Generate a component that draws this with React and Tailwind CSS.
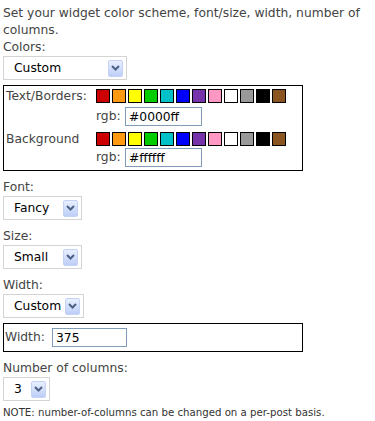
const SWATCHES = [
  "#cc0000",
  "#ff9911",
  "#ffff00",
  "#00cc00",
  "#00c0c8",
  "#0000ff",
  "#7733aa",
  "#ff99c4",
  "#ffffff",
  "#999999",
  "#000000",
  "#8a5520",
];

function Arrow() {
  return (
    <span className="flex h-[17px] w-[15px] items-center justify-center rounded-[2px] border border-[#c4d3f5] bg-gradient-to-b from-[#e8efff] to-[#bdcef7]">
      <svg width="9" height="6" viewBox="0 0 9 6">
        <path d="M1 1 L4.5 4.5 L8 1" fill="none" stroke="#4d6185" strokeWidth="2" />
      </svg>
    </span>
  );
}

function FakeSelect({ value, width }) {
  return (
    <div
      className={`flex h-[24px] items-center justify-between border border-[#d4d4d4] bg-white pl-[10px] pr-[3px] text-black ${width}`}
    >
      <span>{value}</span>
      <Arrow />
    </div>
  );
}

function Swatches() {
  return (
    <div className="flex gap-[2px]">
      {SWATCHES.map((c) => (
        <span key={c} className="h-[14px] w-[14px] border border-black" style={{ backgroundColor: c }} />
      ))}
    </div>
  );
}

function RgbRow({ value }) {
  return (
    <div className="flex items-center">
      <span className="w-[29px]">rgb:</span>
      <input
        readOnly
        value={value}
        className="h-[19px] w-[77px] border border-[#7f9db9] px-[3px] text-black outline-none"
      />
    </div>
  );
}

export default function App() {
  return (
    <div className="min-h-[421px] bg-white px-[3px] pt-[5px] font-['DejaVu_Sans',sans-serif] text-[12.3px] leading-[17px] text-[#444]">
      <p>Set your widget color scheme, font/size, width, number of columns.</p>

      <div>Colors:</div>
      <div>
        <FakeSelect value="Custom" width="w-[124px]" />
      </div>

      <div className="mt-[5px] w-[300px] border border-black px-[2px] pb-[3px] pt-[3px]">
        <div className="grid grid-cols-[90px_1fr]">
          <div className="flex h-[14px] items-center">Text/Borders:</div>
          <Swatches />
          <div />
          <div className="mt-[4px]">
            <RgbRow value="#0000ff" />
          </div>
          <div className="mt-[6px] flex h-[14px] items-center">Background</div>
          <div className="mt-[6px]">
            <Swatches />
          </div>
          <div />
          <div className="mt-[2px]">
            <RgbRow value="#ffffff" />
          </div>
        </div>
      </div>

      <div className="mt-[8px]">Font:</div>
      <FakeSelect value="Fancy" width="w-[79px]" />

      <div className="mt-[8px]">Size:</div>
      <FakeSelect value="Small" width="w-[79px]" />

      <div className="mt-[8px]">Width:</div>
      <FakeSelect value="Custom" width="w-[81px]" />

      <div className="mt-[5px] flex w-[300px] items-center border border-black py-[4px] pl-[1px]">
        <span className="w-[47px]">Width:</span>
        <input
          readOnly
          value="375"
          className="h-[19px] w-[75px] border border-[#7f9db9] px-[3px] text-black outline-none"
        />
      </div>

      <div className="mt-[8px]">Number of columns:</div>
      <FakeSelect value="3" width="w-[47px]" />

      <p className="mt-[5px] text-[10.2px] leading-[14px] text-[#333]">
        NOTE: number-of-columns can be changed on a per-post basis.
      </p>
    </div>
  );
}
